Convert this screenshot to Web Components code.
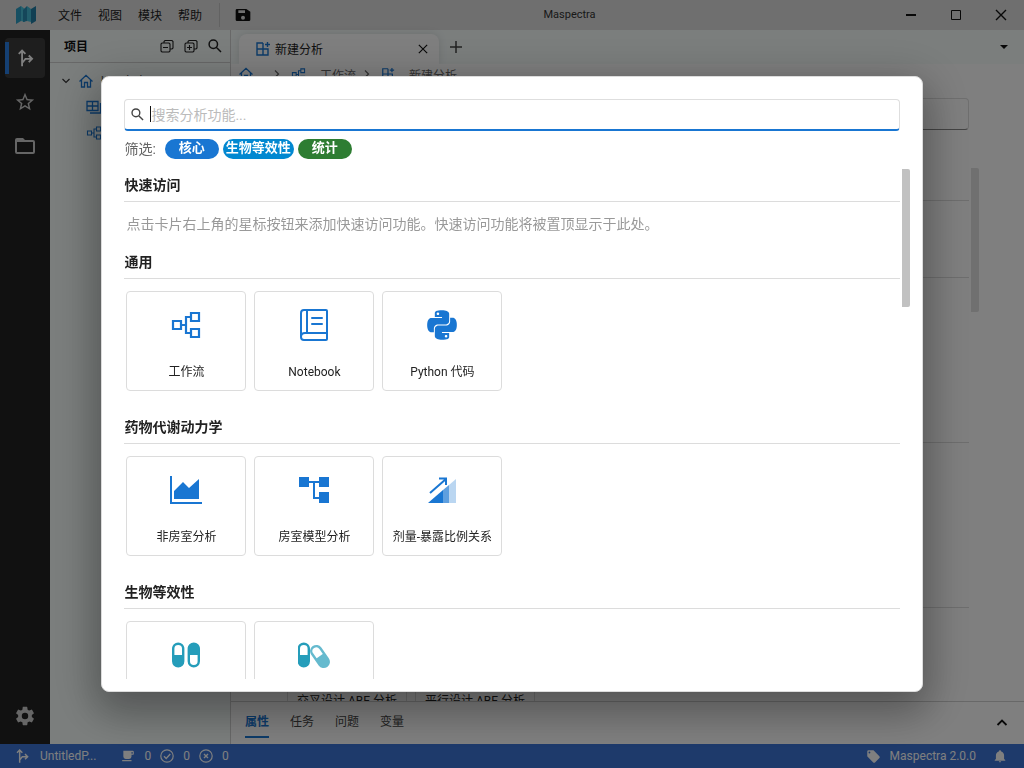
<!DOCTYPE html>
<html lang="zh-CN">
<head>
<meta charset="utf-8">
<title>Maspectra</title>
<style>
  html, body { height: 100%; margin: 0; }
  body {
    font-family: Roboto, "Noto Sans CJK SC", sans-serif;
    font-size: 12px;
    color: #222;
    overflow: hidden;
    --blue: #1976d2;
    --line: #dcdcdc;
    --panel: #f6fcfb;
  }
</style>
</head>
<body>
<app-shell></app-shell>
<script>
const ICONS = {
  logo: ['0 0 22 20', '<path fill="#2f9fc4" d="M1 4l5-3v15l-5 3z"/><path fill="#49c3dc" d="M6 1l4 3v13l-4-1z"/><path fill="#2a8fb5" d="M8 5l4-4v15l-4 1z"/><path fill="#45bdd8" d="M12 1l4 3v13l-4-1z"/><path fill="#227fa6" d="M16 4l5-3v15l-5 3z"/>'],
  save: ['0 0 24 24', '<path fill="currentColor" d="M15 9H5V5h10m-3 14a3 3 0 1 1 0-6 3 3 0 0 1 0 6m5-16H3a2 2 0 0 0-2 2v14a2 2 0 0 0 2 2h18a2 2 0 0 0 2-2V7z"/>'],
  min: ['0 0 12 12', '<path stroke="currentColor" stroke-width="2" d="M1 6h10"/>'],
  max: ['0 0 12 12', '<path fill="none" stroke="currentColor" d="M1.500 1.500h9v9h-9z"/>'],
  close: ['0 0 12 12', '<path fill="none" stroke="currentColor" stroke-width="1.400" d="M1 1l10 10M11 1L1 11"/>'],
  plus: ['0 0 12 12', '<path stroke="currentColor" stroke-width="1.500" d="M6 0v12M0 6h12"/>'],
  caret: ['0 0 10 6', '<path fill="currentColor" d="M1 1h8L5 5z"/>'],
  branch: ['0 0 24 24', '<path fill="none" stroke="currentColor" stroke-width="2.200" d="M8.500 22V3M4.500 7l4-4 4 4M8.500 18l4-5H20M16.500 9l4 4-4 4"/>'],
  star: ['0 0 24 24', '<path fill="currentColor" d="M12 15.390l-3.760 2.270.99-4.280-3.320-2.880 4.380-.37L12 6.090l1.710 4.040 4.380.37-3.320 2.880.99 4.280M22 9.240l-7.190-.61L12 2 9.190 8.630 2 9.240l5.450 4.730L5.820 21 12 17.270 18.180 21l-1.640-7.030z"/>'],
  folder: ['0 0 24 24', '<path fill="currentColor" d="M20 18H4V8h16m0-2h-8l-2-2H4a2 2 0 0 0-2 2v12a2 2 0 0 0 2 2h16a2 2 0 0 0 2-2V8a2 2 0 0 0-2-2z"/>'],
  gear: ['0 0 24 24', '<path fill="currentColor" d="M12 15.500a3.500 3.500 0 1 1 0-7 3.500 3.500 0 0 1 0 7m7.430-2.530c.04-.32.07-.64.07-.97s-.03-.66-.07-1l2.110-1.630c.19-.15.24-.42.12-.64l-2-3.460c-.12-.22-.39-.31-.61-.22l-2.490 1c-.52-.39-1.060-.73-1.690-.98l-.37-2.650A.5.5 0 0 0 14 2h-4c-.25 0-.46.18-.5.42l-.37 2.650c-.63.25-1.170.59-1.690.98l-2.490-1c-.22-.09-.49 0-.61.22l-2 3.460c-.13.22-.07.49.12.64L4.570 11c-.04.34-.07.67-.07 1s.03.65.07.97l-2.110 1.660c-.19.15-.25.42-.12.64l2 3.460c.12.22.39.3.61.22l2.490-1.010c.52.4 1.060.74 1.690.99l.37 2.650c.04.24.25.42.5.42h4c.25 0 .46-.18.5-.42l.37-2.650c.63-.26 1.170-.59 1.690-.99l2.490 1.010c.22.08.49 0 .61-.22l2-3.460c.12-.22.07-.49-.12-.64z"/>'],
  collapse: ['0 0 14 14', '<path fill="none" stroke="currentColor" stroke-width="1.100" d="M4 4V2.500L5 1.500h7l1 1V9l-1 1h-2M2 4h7l1 1v7l-1 1H2l-1-1V5zM3 8.500h5"/>'],
  expand: ['0 0 14 14', '<path fill="none" stroke="currentColor" stroke-width="1.100" d="M4 4V2.500L5 1.500h7l1 1V9l-1 1h-2M2 4h7l1 1v7l-1 1H2l-1-1V5zM3 8.500h5M5.500 6v5"/>'],
  search: ['0 0 14 14', '<path fill="none" stroke="currentColor" stroke-width="1.500" d="M8.300 8.300L13 13M9.500 5.200a4.200 4.200 0 1 1-8.400 0 4.200 4.200 0 0 1 8.400 0z"/>'],
  chevD: ['0 0 10 10', '<path fill="none" stroke="currentColor" stroke-width="1.200" d="M1.500 3L5 6.500 8.500 3"/>'],
  chevR: ['0 0 10 10', '<path fill="none" stroke="currentColor" stroke-width="1.200" d="M3 1.500L6.500 5 3 8.500"/>'],
  chevU: ['0 0 12 12', '<path fill="none" stroke="currentColor" stroke-width="1.800" d="M1.500 8L6 3.500 10.500 8"/>'],
  home: ['0 0 14 14', '<path fill="none" stroke="currentColor" stroke-width="1.300" d="M.5 7.500L7 1.300l6.500 6.200M2.500 6v7h3V8.500h3V13h3V6"/>'],
  tables: ['0 0 16 14', '<path fill="none" stroke="currentColor" stroke-width="1.300" d="M1 1.500h11v9H1zM1 6h11M6.500 1.500v9M14.500 3v10H4"/>'],
  addgrid: ['0 0 16 16', '<path fill="none" stroke="currentColor" stroke-width="1.400" d="M8 2H2v12h11V8H2M8 2v12M12.500 1v5M10 3.500h5"/>'],
  flow: ['0 0 32 32', '<path fill="none" stroke="currentColor" stroke-width="2.200" d="M3 12h8v8H3zM21 4h8v8h-8zM21 20h8v8h-8zM11 16h5M21 8h-5v16h5"/>'],
  book: ['0 0 32 32', '<path fill="none" stroke="currentColor" stroke-width="2" d="M6 1h22q1 0 1 1v28q0 1-1 1H6q-3 0-3-3V4q0-3 3-3zM9 1v23M29 24H7q-4 0-4 4"/><path stroke="currentColor" stroke-width="2" stroke-linecap="round" d="M14 9h10M14 15h10"/>'],
  python: ['-1 -1 26 26', '<path fill="currentColor" d="M14.25.18l.9.2.73.26.59.3.45.32.34.34.25.34.16.33.1.3.04.26.02.2-.01.13V8.500l-.05.63-.13.55-.21.46-.26.38-.3.31-.33.25-.35.19-.35.14-.33.1-.3.07-.26.04-.21.02H8.770l-.69.05-.59.14-.5.22-.41.27-.33.32-.27.35-.2.36-.15.37-.1.35-.07.32-.04.27-.02.21v3.060H3.170l-.21-.03-.28-.07-.32-.12-.35-.18-.36-.26-.36-.36-.35-.46-.32-.59-.28-.73-.21-.88-.14-1.050-.05-1.230.06-1.220.16-1.040.24-.87.32-.71.36-.57.4-.44.42-.33.42-.24.4-.16.36-.1.32-.05.24-.01h.16l.06.01h8.160v-.83H6.180l-.01-2.750-.02-.37.05-.34.11-.31.17-.28.25-.26.31-.23.38-.2.44-.18.51-.15.58-.12.64-.1.71-.06.77-.04.84-.02 1.270.05zm-6.300 1.980l-.23.33-.08.41.08.41.23.34.33.22.41.09.41-.09.33-.22.23-.34.08-.41-.08-.41-.23-.33-.33-.22-.41-.09-.41.09zm13.090 3.950l.28.06.32.12.35.18.36.27.36.35.35.47.32.59.28.73.21.88.14 1.040.05 1.230-.06 1.230-.16 1.040-.24.86-.32.71-.36.57-.4.45-.42.33-.42.24-.4.16-.36.09-.32.05-.24.02-.16-.01h-8.220v.82h5.840l.01 2.760.02.36-.05.34-.11.31-.17.29-.25.25-.31.24-.38.2-.44.17-.51.15-.58.13-.64.09-.71.07-.77.04-.84.01-1.270-.04-1.070-.14-.9-.2-.73-.25-.59-.3-.45-.33-.34-.34-.25-.34-.16-.33-.1-.3-.04-.25-.02-.2.01-.13v-5.340l.05-.64.13-.54.21-.46.26-.38.3-.32.33-.24.35-.2.35-.14.33-.1.3-.06.26-.04.21-.02.13-.01h5.840l.69-.05.59-.14.5-.21.41-.28.33-.32.27-.35.2-.36.15-.36.1-.35.07-.32.04-.28.02-.21V6.070h2.090l.14.01zm-6.470 14.250l-.23.33-.08.41.08.41.23.33.33.23.41.08.41-.08.33-.23.23-.33.08-.41-.08-.41-.23-.33-.33-.23-.41-.08-.41.08z"/>'],
  area: ['0 0 32 32', '<path fill="currentColor" d="M0 2h2v26h30v2H0zM4 25v-8l9-9 6 6 10-9v20z"/>'],
  tree: ['0 0 32 32', '<path fill="currentColor" d="M1 3h10v10H1zM21 3h10v10H21zM21 18h10v11H21z"/><path fill="none" stroke="currentColor" stroke-width="2" d="M11 8h10M16 8v16h5"/>'],
  dose: ['0 0 32 32', '<path fill="currentColor" d="M2 29L17 16v13z"/><path fill="currentColor" opacity=".7" d="M17 16l6-5v18h-6z"/><path fill="currentColor" opacity=".3" d="M23 11l7-6v24h-7z"/><path fill="none" stroke="currentColor" stroke-width="2" d="M4 19L20 5M13 4.500h7V11"/>'],
  pills: ['0 0 32 32', '<g fill="none" stroke="currentColor" stroke-width="2.400"><rect x="3.200" y="4.700" width="10" height="22.600" rx="5"/><rect x="18.800" y="4.700" width="10" height="22.600" rx="5"/></g><path fill="currentColor" d="M3 16h10.500v6.500a5.200 5.200 0 0 1-10.500 0zM18.600 16h10.500V9.500a5.200 5.200 0 0 0-10.500 0z"/>'],
  pillsTilt: ['0 0 32 32', '<rect x=".8" y="4.700" width="10" height="22.600" rx="5" fill="none" stroke="currentColor" stroke-width="2.400"/><path fill="currentColor" d="M.8 16h10v6.500a5 5 0 0 1-10 0z"/><g opacity=".7" transform="rotate(-35 22 17.500)"><rect x="17" y="6" width="10" height="23" rx="5" fill="none" stroke="currentColor" stroke-width="2.400"/><path fill="currentColor" d="M17 17h10v7a5 5 0 0 1-10 0z"/></g>'],
  cup: ['0 0 24 24', '<path fill="currentColor" d="M2 21h16v-2H2m18-11h-2V5h2m0-2H4v10a4 4 0 0 0 4 4h6a4 4 0 0 0 4-4v-3h2a2 2 0 0 0 2-2V5a2 2 0 0 0-2-2z"/>'],
  check: ['0 0 14 14', '<circle cx="7" cy="7" r="6.200" fill="none" stroke="currentColor" stroke-width="1.200"/><path fill="none" stroke="currentColor" stroke-width="1.400" d="M4 7.200l2.200 2.200L10.300 5"/>'],
  error: ['0 0 14 14', '<circle cx="7" cy="7" r="6.200" fill="none" stroke="currentColor" stroke-width="1.200"/><path stroke="currentColor" stroke-width="1.400" d="M5 5l4 4M9 5L5 9"/>'],
  tag: ['0 0 24 24', '<path fill="currentColor" d="M5.500 7A1.500 1.500 0 1 1 5.500 4a1.500 1.500 0 0 1 0 3m15.910 4.580l-9-9C12.050 2.220 11.550 2 11 2H4a2 2 0 0 0-2 2v7c0 .55.22 1.050.59 1.410l9 9c.36.36.86.59 1.410.59s1.050-.23 1.410-.59l7-7c.37-.36.59-.86.59-1.410 0-.56-.23-1.060-.59-1.420z"/>'],
  bell: ['0 0 24 24', '<path fill="currentColor" d="M21 19v1H3v-1l2-2v-6c0-3.100 2.030-5.830 5-6.710V4a2 2 0 0 1 4 0v.29c2.970.88 5 3.610 5 6.710v6zm-7 2a2 2 0 0 1-4 0"/>']
};

const RESET = `
  *, *::before, *::after { box-sizing: border-box; }
  button { font: inherit; color: inherit; background: none; border: 0; padding: 0; margin: 0; display: inline-flex; align-items: center; justify-content: center; }
  a { color: inherit; text-decoration: none; }
`;

function define(name, css, html) {
  customElements.define(name, class extends HTMLElement {
    constructor() {
      super();
      this.attachShadow({ mode: 'open' });
    }
    connectedCallback() {
      const body = typeof html === 'function' ? html(this) : html;
      this.shadowRoot.innerHTML = `<style>${RESET}${css}</style>${body}`;
    }
  });
}

define('ui-icon',
  ':host { display: inline-flex; flex: none; } svg { display: block; }',
  el => {
    const [box, shape] = ICONS[el.getAttribute('name')];
    const s = el.getAttribute('size') || 16;
    return `<svg viewBox="${box}" width="${s}" height="${s}" aria-hidden="true">${shape}</svg>`;
  });

define('title-bar', `
  :host { display: flex; align-items: center; height: 30px; background: #dedede; flex: none; }
  .left { display: flex; align-items: center; padding-left: 15px; }
  nav { display: flex; gap: 16px; margin-left: 21px; }
  nav button { padding-bottom: 2px; }
  .save { border-left: 1px solid #c4c4c4; height: 24px; margin-left: 17px; padding-left: 15px; color: #111; }
  .title { flex: 1; text-align: center; padding-bottom: 2px; font-size: 11px; color: #333; }
  .win { display: flex; justify-content: flex-end; color: #111; padding-right: 1px; }
  .win button { width: 45px; height: 30px; }`, `
  <div class="left"><ui-icon name="logo" size="22"></ui-icon>
    <nav><button>文件</button><button>视图</button><button>模块</button><button>帮助</button></nav>
    <button class="save" aria-label="保存"><ui-icon name="save" size="16"></ui-icon></button></div>
  <div class="title">Maspectra</div>
  <div class="win"><button aria-label="最小化"><ui-icon name="min" size="12"></ui-icon></button><button aria-label="最大化"><ui-icon name="max" size="12"></ui-icon></button><button aria-label="关闭"><ui-icon name="close" size="12"></ui-icon></button></div>`);

define('activity-bar', `
  :host { display: flex; flex-direction: column; gap: 4px; width: 50px; padding: 8px 5px; background: #222; color: #ccc; flex: none; }
  button { width: 40px; height: 40px; border-radius: 4px; }
  .on { background: linear-gradient(90deg, #2a80e6 4px, transparent 4px) 0 4px / 100% 32px no-repeat #3c3c3c; color: #fff; }
  .end { margin-top: auto; }`, `
  <button class="on" aria-label="项目"><ui-icon name="branch" size="20"></ui-icon></button>
  <button aria-label="收藏"><ui-icon name="star" size="22"></ui-icon></button>
  <button aria-label="文件夹"><ui-icon name="folder" size="24"></ui-icon></button>
  <button class="end" aria-label="设置"><ui-icon name="gear" size="22"></ui-icon></button>`);

define('project-panel', `
  :host { display: flex; flex-direction: column; width: 181px; background: var(--panel); border-right: 1px solid #d0d0d0; flex: none; }
  header { display: flex; align-items: center; gap: 10px; height: 33px; padding: 0 8px 0 14px; border-bottom: 1px solid #d0d0d0; }
  h2 { margin: 0 auto 0 0; padding-bottom: 2px; font-size: 12px; font-weight: 700; color: #111; }
  ul { list-style: none; margin: 0; padding: 5px 0 0 11px; }
  li { display: flex; align-items: center; gap: 8px; height: 26px; white-space: nowrap; overflow: hidden; color: #555; }
  li ui-icon { color: var(--blue); }
  li .tw { color: #333; }
  .sub { padding-left: 25px; }`, `
  <header><h2>项目</h2>
    <button aria-label="全部折叠"><ui-icon name="collapse" size="14"></ui-icon></button>
    <button aria-label="全部展开"><ui-icon name="expand" size="14"></ui-icon></button>
    <button aria-label="搜索"><ui-icon name="search" size="14"></ui-icon></button></header>
  <ul><li><ui-icon class="tw" name="chevD" size="10"></ui-icon><ui-icon name="home" size="14"></ui-icon>UntitledP…</li>
    <li class="sub"><ui-icon name="tables" size="16"></ui-icon></li>
    <li class="sub"><ui-icon name="flow" size="16"></ui-icon></li></ul>`);

define('tab-strip', `
  :host { display: flex; align-items: center; height: 34px; background: var(--panel); padding: 4px 15px 0 8px; flex: none; }
  .tab { display: flex; align-items: center; gap: 4px; width: 200px; height: 30px; padding: 0 11px 0 16px; background: #fff; border-radius: 8px 8px 0 0; color: #222; box-shadow: 0 0 8px rgba(0,0,0,.12); clip-path: inset(-8px -8px 0 -8px); }
  .tab span { padding-bottom: 2px; }
  .tab button { margin-left: auto; color: #111; }
  .add { margin-left: 11px; padding-bottom: 4px; color: #444; }
  .more { margin-left: auto; padding-bottom: 4px; color: #111; }`, `
  <div class="tab"><ui-icon name="addgrid" size="16" style="color:var(--blue)"></ui-icon><span>新建分析</span><button aria-label="关闭标签"><ui-icon name="close" size="10"></ui-icon></button></div>
  <button class="add" aria-label="新建标签"><ui-icon name="plus" size="12"></ui-icon></button>
  <button class="more" aria-label="更多"><ui-icon name="caret" size="10"></ui-icon></button>`);

define('bread-crumb', `
  :host { display: flex; align-items: center; height: 20px; padding-left: 8px; color: #666; flex: none; }
  a { display: flex; align-items: center; gap: 14px; }
  a ui-icon { color: var(--blue); }
  .sep { margin: 0 9px 0 6px; }
  .sep.first { margin-left: 19px; }`, `
  <a href="#" aria-label="主页"><ui-icon name="home" size="14"></ui-icon></a>
  <ui-icon class="sep first" name="chevR" size="10"></ui-icon>
  <a href="#"><ui-icon name="flow" size="15"></ui-icon>工作流</a>
  <ui-icon class="sep" name="chevR" size="10"></ui-icon>
  <a href="#"><ui-icon name="addgrid" size="14"></ui-icon>新建分析</a>`);

define('search-field', `
  :host { display: block; margin-right: 10px; }
  label { display: flex; align-items: center; height: 32px; padding: 0 6px; background: #fff; border: 1px solid #dedede; border-bottom-color: #888; border-radius: 4px; color: #444; }
  :host([active]) label { border-bottom: 2px solid var(--blue); }
  i { width: 1px; height: 16px; margin-left: 6px; background: transparent; }
  :host([active]) i { background: #111; }
  input { flex: 1; min-width: 0; border: 0; outline: 0; padding: 2px 0 0; background: none; font: inherit; font-size: 14px; color: #222; }
  input::placeholder { color: #bbb; opacity: 1; }`,
  el => `<label><ui-icon name="search" size="13"></ui-icon><i></i><input type="text" aria-label="搜索" placeholder="${el.getAttribute('placeholder') || ''}"></label>`);

define('filter-chips', `
  :host { display: flex; align-items: center; gap: 4px; height: 20px; margin-top: 8px; font-size: 14px; color: #666; }
  span { margin-right: 5px; padding-bottom: 2px; }
  button { min-width: 54px; height: 20px; padding: 0 3px 2px; border-radius: 10px; font-size: 13px; font-weight: 700; line-height: 18px; color: #fff; background: var(--blue); }
  .be { background: #0288d1; } .st { background: #2e7d32; }`, `
  <span>筛选:</span><button>核心</button><button class="be">生物等效性</button><button class="st">统计</button>`);

define('scroll-pane', `
  :host { display: flex; gap: 2px; flex: 1; min-height: 0; overflow: hidden; margin-top: 10px; }
  .content { flex: 1; min-width: 0; }
  .thumb { width: 8px; height: 27%; background: var(--thumb, #c1c1c1); border-radius: 0 2px 2px 0; }`,
  '<div class="content"><slot></slot></div><div class="thumb"></div>');

define('analysis-section', `
  :host { display: block; }
  h3 { margin: 0; height: 33px; line-height: 32px; border-bottom: 1px solid var(--line); font-size: 14px; font-weight: 700; color: #222; }
  .cards { display: flex; gap: 8px; padding: 12px 2px 20px; min-height: 132px; }
  :host([plain]) .cards { min-height: 44px; padding: 12px 2px; font-size: 14px; line-height: 20px; color: #999; }`,
  el => `<h3>${el.getAttribute('heading') || ''}</h3><div class="cards"><slot></slot></div>`);

define('analysis-card', `
  :host { display: block; width: 120px; height: 100px; }
  button { display: flex; flex-direction: column; justify-content: flex-start; width: 100%; height: 100%; padding-top: 17px; border: 1px solid var(--line); border-radius: 4px; background: #fff; color: #222; }
  ui-icon { color: var(--tint, var(--blue)); margin-bottom: 21px; }
  span { line-height: 20px; white-space: nowrap; }`,
  el => `<button><ui-icon name="${el.getAttribute('icon')}" size="32"></ui-icon><span><slot></slot></span></button>`);

define('bottom-panel', `
  :host { display: flex; align-items: center; height: 43px; padding: 0 16px 0 14px; border-top: 1px solid #d0d0d0; background: #fff; flex: none; }
  nav { display: flex; gap: 21px; height: 100%; color: #444; }
  nav button { height: 36px; padding-top: 3px; border-bottom: 2px solid transparent; }
  nav .on { color: var(--blue); border-color: var(--blue); font-weight: 700; }
  .up { margin-left: auto; color: #111; }`, `
  <nav><button class="on">属性</button><button>任务</button><button>问题</button><button>变量</button></nav>
  <button class="up" aria-label="展开"><ui-icon name="chevU" size="12"></ui-icon></button>`);

define('status-bar', `
  :host { display: flex; align-items: center; height: 24px; padding: 0 17px 0 14px; background: #3c74d6; color: #fff; flex: none; }
  .name { margin: 0 25px 0 10px; }
  .count { display: flex; align-items: center; gap: 9px; margin-right: 9px; }
  .ver { display: flex; align-items: center; gap: 9px; margin: 0 17px 0 auto; }`, `
  <ui-icon name="branch" size="16"></ui-icon><span class="name">UntitledP...</span>
  <span class="count"><ui-icon name="cup" size="14"></ui-icon>0</span>
  <span class="count"><ui-icon name="check" size="14"></ui-icon>0</span>
  <span class="count"><ui-icon name="error" size="14"></ui-icon>0</span>
  <span class="ver"><ui-icon name="tag" size="15"></ui-icon>Maspectra 2.0.0</span>
  <ui-icon name="bell" size="14"></ui-icon>`);

define('modal-dialog', `
  :host { position: fixed; inset: 0; display: flex; align-items: center; justify-content: center; background: rgba(0,0,0,.5); }
  [role=dialog] { box-sizing: content-box; width: 80%; height: 80%; border: 1px solid #dcdcdc; border-radius: 8px; background: #fff; box-shadow: 0 9px 46px 8px rgba(0,0,0,.2), 0 20px 38px 3px rgba(0,0,0,.18); }
  .pad { display: flex; flex-direction: column; height: 100%; padding: 22px 12px 12px 22px; }`,
  '<div role="dialog" aria-modal="true" aria-label="新建分析"><div class="pad"><slot></slot></div></div>');

define('app-shell', `
  :host { display: flex; flex-direction: column; height: 100vh; background: #fff; }
  .body { display: flex; flex: 1; min-height: 0; }
  main { display: flex; flex-direction: column; flex: 1; min-width: 0; }
  .page { --thumb: #e0e0e0; display: flex; flex-direction: column; flex: 1; min-height: 0; padding: 14px 45px 0 54px; }
  .page scroll-pane { margin-top: 38px; }
  .be { --tint: #259dba; }`, `
  <title-bar></title-bar>
  <div class="body">
    <activity-bar></activity-bar>
    <project-panel></project-panel>
    <main>
      <tab-strip></tab-strip>
      <bread-crumb></bread-crumb>
      <div class="page">
        <search-field></search-field>
        <scroll-pane>
          <analysis-section plain></analysis-section>
          <analysis-section></analysis-section>
          <analysis-section></analysis-section>
          <analysis-section class="be">
            <analysis-card icon="pills">交叉设计 ABE 分析</analysis-card>
            <analysis-card icon="pillsTilt">平行设计 ABE 分析</analysis-card>
          </analysis-section>
        </scroll-pane>
      </div>
      <bottom-panel></bottom-panel>
    </main>
  </div>
  <status-bar></status-bar>
  <modal-dialog>
    <search-field active placeholder="搜索分析功能..."></search-field>
    <filter-chips></filter-chips>
    <scroll-pane>
      <analysis-section plain heading="快速访问">点击卡片右上角的星标按钮来添加快速访问功能。快速访问功能将被置顶显示于此处。</analysis-section>
      <analysis-section heading="通用">
        <analysis-card icon="flow">工作流</analysis-card>
        <analysis-card icon="book">Notebook</analysis-card>
        <analysis-card icon="python">Python 代码</analysis-card>
      </analysis-section>
      <analysis-section heading="药物代谢动力学">
        <analysis-card icon="area">非房室分析</analysis-card>
        <analysis-card icon="tree">房室模型分析</analysis-card>
        <analysis-card icon="dose">剂量-暴露比例关系</analysis-card>
      </analysis-section>
      <analysis-section class="be" heading="生物等效性">
        <analysis-card icon="pills"></analysis-card>
        <analysis-card icon="pillsTilt"></analysis-card>
      </analysis-section>
    </scroll-pane>
  </modal-dialog>`);
</script>
</body>
</html>
